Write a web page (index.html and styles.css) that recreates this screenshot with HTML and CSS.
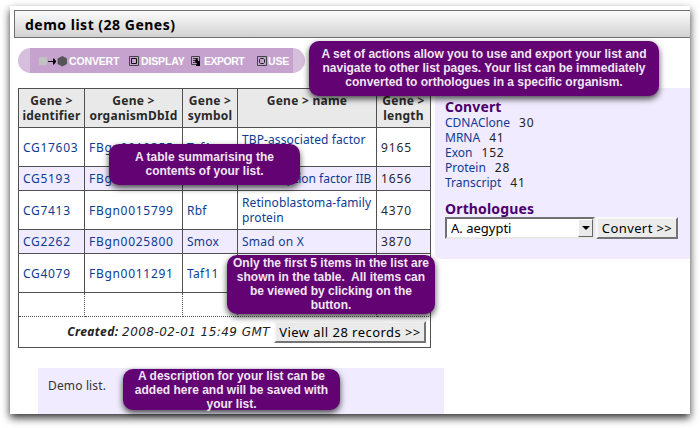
FILE: index.html
```html
<!DOCTYPE html>
<html lang="en">
<head>
<meta charset="utf-8">
<title>demo list</title>
<link rel="stylesheet" href="styles.css">
</head>
<body>
<main class="page">
  <h1 class="title">demo list (28 Genes)</h1>
  <nav class="toolbar">
    <a class="tool convert"><svg width="29" height="12" viewBox="0 0 29 12"><path fill="#c2c2c2" d="M0 2h8v8H0z"/><path fill="#000" d="M9 6h5V3.500h1l2 2.500v1l-2 2.500h-1V7H9z"/><path fill="#555" d="M23.300 1l4.700 2.500v5.500l-4.700 2.500-4.700-2.500V3.500z"/></svg><span>CONVERT</span></a>
    <a class="tool display"><svg width="10" height="10" viewBox="0 0 10 10"><path fill="none" stroke="#444" d="M.5.5h9v9h-9z"/><path fill="none" stroke="#111" d="M2.500 2.500h5v5h-5z"/></svg><span>DISPLAY</span></a>
    <a class="tool export"><svg width="11" height="10" viewBox="0 0 11 10"><path fill="none" stroke="#444" d="M.5.5h8v8h-8z"/><path stroke="#333" d="M2 2.500h5M2 4.500h3M2 6.500h3"/><path fill="#000" d="M4 4l2-1.500 1.500 2.500L9 5.500V10H5V8.500h1.500L4.500 6z"/></svg><span>EXPORT</span></a>
    <a class="tool use"><svg width="10" height="10" viewBox="0 0 10 10"><path fill="none" stroke="#444" d="M.5.5h9v9h-9z"/><path fill="none" stroke="#222" d="M3.500 2.500h3l1 1v3l-1 1h-3l-1-1v-3z"/></svg><span>USE</span></a>
  </nav>
  <div class="columns">
    <table class="genes">
      <colgroup><col class="c1"><col class="c2"><col class="c3"><col class="c4"><col class="c5"></colgroup>
      <tr class="head"><th>Gene &gt;<br>identifier</th><th>Gene &gt;<br>organismDbId</th><th>Gene &gt;<br>symbol</th><th>Gene &gt; name</th><th>Gene &gt;<br>length</th></tr>
      <tr class="tall"><td class="num">CG17603</td><td class="num">FBgn0010355</td><td>Taf1</td><td class="name">TBP-associated factor<br>1</td><td class="len">9165</td></tr>
      <tr class="short alt"><td class="num">CG5193</td><td class="num">FBgn0004915</td><td>TfIIB</td><td class="iib">Transcription factor IIB</td><td class="len">1656</td></tr>
      <tr class="tall"><td class="num">CG7413</td><td class="num">FBgn0015799</td><td>Rbf</td><td class="name">Retinoblastoma-family<br>protein</td><td class="len">4370</td></tr>
      <tr class="short alt"><td class="num">CG2262</td><td class="num">FBgn0025800</td><td>Smox</td><td>Smad on X</td><td class="len">3870</td></tr>
      <tr class="tall"><td class="num">CG4079</td><td class="num">FBgn0011291</td><td>Taf11</td><td></td><td></td></tr>
      <tr class="short more"><td></td><td></td><td></td><td></td><td></td></tr>
      <tr class="foot"><td colspan="5"><div class="created"><span class="stamp"><b>Created:</b> <span class="date">2008-02-01 15:49 GMT</span></span><button class="btn view">View all 28 records &gt;&gt;</button></div></td></tr>
    </table>
    <aside class="side">
      <h2>Convert</h2>
      <ul>
        <li><a>CDNAClone</a><span>30</span></li>
        <li><a>MRNA</a><span>41</span></li>
        <li><a>Exon</a><span>152</span></li>
        <li><a>Protein</a><span>28</span></li>
        <li><a>Transcript</a><span>41</span></li>
      </ul>
      <h2>Orthologues</h2>
      <div class="form">
        <div class="select"><span>A. aegypti</span><i class="drop"></i></div>
        <button class="btn go">Convert &gt;&gt;</button>
      </div>
    </aside>
  </div>
  <div class="desc">Demo list.</div>
</main>
<div class="callout actions">A set of actions allow you to use and export your list and<br>navigate to other list pages. Your list can be immediately<br>converted to orthologues in a specific organism.</div>
<div class="callout summary">A table summarising the<br>contents of your list.</div>
<div class="callout items">Only the first 5 items in the list are<br>shown in the table.&nbsp; All items can<br>be viewed by clicking on the<br>button.</div>
<div class="callout about">A description for your list can be<br>added here and will be saved with<br>your list.</div>
</body>
</html>
```
FILE: styles.css
```css
* { box-sizing: border-box; }
body {
  margin: 0;
  padding: 6px 10px 14px;
  height: 428px;
  overflow: hidden;
  background: #fff;
  font: 12px/15px "Noto Sans", "Open Sans", sans-serif;
  color: #222;
}
.page {
  width: 680px;
  height: 408px;
  padding-top: 4px;
  background: #fff;
  box-shadow: 0 4px 8px rgba(0, 0, 0, .8);
}
.title {
  margin: 0 0 10px 4px;
  height: 28px;
  padding-left: 10px;
  border: 1px solid #707070;
  border-right: 0;
  background: linear-gradient(#fbfbfb, #d2d2d2);
  font-size: 14px;
  line-height: 27px;
  letter-spacing: .5px;
  color: #000;
}
.toolbar {
  display: flex;
  align-items: center;
  width: 287px;
  height: 25px;
  margin-left: 8px;
  padding-left: 21px;
  border-radius: 12.5px;
  background: linear-gradient(90deg, #d6bedd 12px, #c5a3ce 12px, #c5a3ce 275px, #d6bedd 275px);
  font: bold 10.5px/12px "Liberation Sans", sans-serif;
  letter-spacing: -.15px;
  color: #fff;
}
.tool { display: flex; align-items: center; gap: 2px; }
.tool svg { display: block; }
.convert { width: 90px; gap: 1px; }
.display { width: 62px; }
.export { width: 66px; letter-spacing: -.5px; }
.use { gap: 1px; }
.columns { display: flex; gap: 4px; margin: 15px 0 0 8px; }
.genes {
  width: 413px;
  table-layout: fixed;
  border-spacing: 0;
  border: 0 solid #505050;
  border-width: 1px 0 0 1px;
}
.c1 { width: 66px; }
.c2 { width: 98px; }
.c3 { width: 55px; }
.c4 { width: 139px; }
.c5 { width: 54px; }
.genes th, .genes td {
  padding: 0 0 0 4px;
  border: 0 solid #505050;
  border-width: 0 1px 1px 0;
  white-space: nowrap;
  text-align: left;
  vertical-align: middle;
  color: #0d3c92;
  letter-spacing: .25px;
}
.genes .head th {
  padding: 4px 0 0;
  text-align: center;
  vertical-align: top;
  background: #e9e9e9;
  color: #292929;
  letter-spacing: .25px;
}
.head { height: 39px; }
.tall { height: 39px; }
.short { height: 24px; }
.alt { background: #f0ebfe; }
.genes .num { letter-spacing: .7px; }
.genes .name { letter-spacing: .1px; }
.genes .iib { letter-spacing: 0; }
.genes .len { color: #292929; letter-spacing: .9px; }
.genes .more td { border-right-style: dotted; border-bottom-style: dotted; }
.genes .more td:last-child { border-right-style: solid; }
.foot { height: 31px; }
.created { display: flex; justify-content: flex-end; align-items: center; gap: 4px; padding-right: 4px; }
.stamp { font-style: italic; color: #222; letter-spacing: .4px; }
.date { font-family: "DejaVu Sans", sans-serif; letter-spacing: .45px; }
.btn {
  height: 22px;
  padding: 0;
  border: 2px solid;
  border-color: #f8f8f8 #747474 #747474 #f8f8f8;
  background: #ebebeb;
  font: 13px/17px "Noto Sans", sans-serif;
  color: #000;
  white-space: nowrap;
}
.view { width: 152px; letter-spacing: .45px; }
.side {
  width: 255px;
  height: 171px;
  padding: 11px 0 0 10px;
  border-radius: 0 0 0 6px;
  background: #f0ebfe;
}
.side h2 { margin: 0; font-size: 14px; line-height: 16px; color: #4c006c; letter-spacing: .15px; }
.side ul { list-style: none; margin: 0 0 11px; padding: 0; }
.side li { display: flex; gap: 9px; height: 15px; }
.side a { color: #0d3c92; }
.side li span { letter-spacing: .8px; }
.form { display: flex; gap: 1px; }
.select {
  display: flex;
  justify-content: space-between;
  width: 150px;
  height: 22px;
  padding-left: 4px;
  border: 2px solid;
  border-color: #707070 #e8e8e8 #e8e8e8 #707070;
  background: #fff;
  font-size: 13px;
  line-height: 18px;
  color: #000;
}
.drop {
  display: flex;
  align-items: center;
  justify-content: center;
  width: 15px;
  height: 18px;
  border: 1px solid;
  border-color: #fff #666 #666 #fff;
  background: #e9e9e9;
}
.drop::before { content: ""; border: 4px solid transparent; border-top-color: #000; border-bottom: 0; }
.go { width: 82px; letter-spacing: .4px; }
.desc {
  width: 406px;
  height: 46px;
  margin: 20px 0 0 28px;
  padding: 10px;
  background: #f0ebfe;
  color: #333;
  letter-spacing: .15px;
}
.callout {
  position: absolute;
  border-radius: 10px;
  background: #620273;
  box-shadow: 0 3px 6px rgba(0, 0, 0, .7);
  font: bold 12px/14px "Liberation Sans", sans-serif;
  text-align: center;
  white-space: nowrap;
  color: #f1e6f3;
}
.actions { left: 309px; top: 41px; width: 350px; height: 55px; padding-top: 6px; }
.summary { left: 109px; top: 144px; width: 191px; height: 41px; padding-top: 6px; }
.items { left: 227px; top: 255px; width: 208px; height: 59px; padding-top: 1px; }
.about { left: 123px; top: 369px; width: 217px; height: 41px; padding-top: 0; }
```
